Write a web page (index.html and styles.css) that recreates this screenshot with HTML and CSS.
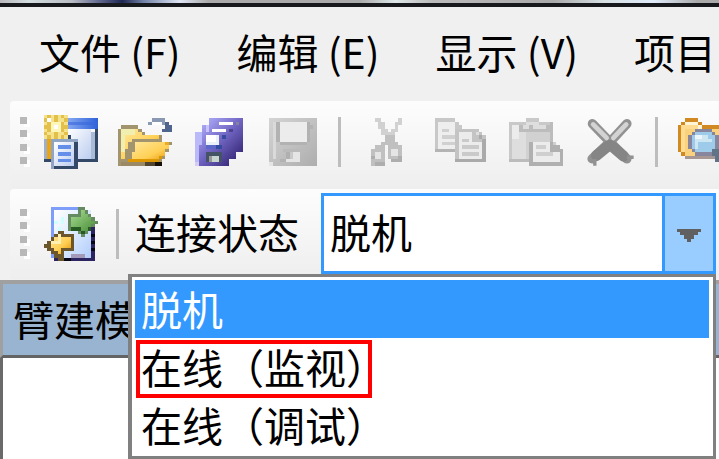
FILE: index.html
```html
<!DOCTYPE html>
<html lang="zh-CN">
<head>
<meta charset="utf-8">
<title>连接状态</title>
<link rel="stylesheet" href="styles.css">
</head>
<body>
<div class="window">
  <div class="title-edge"></div>
  <nav class="menu-bar">
    <button type="button">文件 (F)</button>
    <button type="button">编辑 (E)</button>
    <button type="button">显示 (V)</button>
    <button type="button">项目</button>
  </nav>

  <div class="toolbar toolbar-main" role="toolbar" aria-label="标准">
    <svg class="grip" viewBox="0 0 10 50" aria-hidden="true"><path fill="#fff" d="M4 3h6v7H4zM4 16h6v7H4zM4 30h6v7H4zM4 43h6v7H4z"/><path fill="#b8b8b8" d="M0 0h7v7H0zM0 13h7v7H0zM0 27h7v7H0zM0 40h7v7H0z"/></svg>
    <div class="group">
      <button type="button" aria-label="新建">
        <svg viewBox="0 0 16 16">
          <defs>
            <linearGradient id="pane" x1="0" y1="0" x2="1" y2="1"><stop offset="0" stop-color="#fff"/><stop offset="1" stop-color="#bccdf0"/></linearGradient>
            <linearGradient id="cap" x1="0" y1="0" x2="1" y2="0"><stop offset="0" stop-color="#8fb0f5"/><stop offset="1" stop-color="#2f62d8"/></linearGradient>
            <linearGradient id="gold" x1="0" y1="0" x2="1" y2="1"><stop offset="0" stop-color="#ffe9a0"/><stop offset=".6" stop-color="#ffd055"/><stop offset="1" stop-color="#e09000"/></linearGradient>
          </defs>
          <path fill="#9cb0cc" d="M0 7h1v7H0zM14 5h1v8h-1z"/><path fill="#344868" d="M0 13h16v1H0zM15 4h1v10h-1z"/>
          <path fill="url(#pane)" d="M7 4h7v9H7z"/><path fill="#aabbd6" d="M14 5h1v8h-1z"/>
          <path fill="url(#cap)" d="M6 1h10v3H6z"/><path fill="#3868dc" d="M7 2h9v1H7z" opacity=".6"/>
          <path fill="#eba510" d="M1 7h1v6H1z"/>
          <path fill="#f4e28c" d="M0 0h7v7H0z"/><path fill="#e3c04a" d="M1 0h1v1H1zM3 0h1v2H3zM5 0h1v1H5zM0 1h1v1H0zM6 1h1v1H6zM1 2h1v1H1zM5 2h1v1H5zM0 3h2v1H0zM5 3h2v1H5zM1 4h1v1H1zM5 4h1v1H5zM0 5h1v1H0zM3 5h1v2H3zM6 5h1v1H6zM1 6h1v1H1zM5 6h1v1H5z"/>
          <path fill="#fff7ba" d="M2 2h3v3H2z"/><path fill="#fff" d="M3 3h1v1H3zM1 1h1v1H1z"/>
          <path fill="#344868" d="M7 6h1v1H7zM9 8h1v8H9zM3 15h7v1H3z"/><path fill="#8fa5c3" d="M2 7h8v1H2zM2 7h1v9H2z"/>
          <path fill="url(#pane)" d="M3 8h6v7H3z"/><path fill="#648ee8" d="M4 9h4v1H4zM4 11h4v1H4zM4 13h4v1H4z"/>
        </svg>
      </button>
      <button type="button" aria-label="打开">
        <svg viewBox="0 0 16 16">
          <path fill="#a39470" d="M1 3h5v1h1v1h1v1h5v2h3v1h-1v2h-1v2h-1v2H0V4h1z"/>
          <path fill="url(#gold)" d="M1 4h5v1h1v1h5v1H4v1H3v2H2v3H1z"/><path fill="#f0efaf" d="M1 4h4v2H2v5H1z"/>
          <path fill="url(#gold)" d="M5 8h9v1h1v1h-1v2h-1v1h-1v1H3v-1h1v-2h1z"/>
          <path fill="#df9700" d="M3 13h9v1H3zM12 12h1v1h-1z"/><path fill="#e8ab26" d="M14 8h1v1h-1z"/>
          <path fill="#9b8865" d="M1 14h7v1H1z"/><path fill="#51452f" d="M8 14h3v1H8z"/><path fill="#151008" d="M11 14h2v1h-2z"/>
          <path fill="#8999b4" d="M9 2h1v1H9zM10 1h4v1h-4zM13 2h1v1h-1z"/><path fill="#50658d" d="M14 2h1v2h-1zM13 4h3v1h-3zM15 3h1v1h-1z"/><path fill="#fff" d="M10 2h3v1h-3z"/>
        </svg>
      </button>
      <button type="button" aria-label="全部保存">
        <svg viewBox="0 0 16 16">
          <defs><linearGradient id="disk" x1="0" y1="0" x2="1" y2="1"><stop offset="0" stop-color="#a9a6f5"/><stop offset=".5" stop-color="#7065c2"/><stop offset="1" stop-color="#3b2e7e"/></linearGradient></defs>
          <path fill="url(#disk)" d="M5 1h10v10H5z"/><path fill="#fff" d="M8 2h4v1H8z"/><path fill="#85829f" d="M13 2h1v1h-1z"/>
          <path fill="url(#disk)" d="M3 3h10v10H3z"/><path fill="#c9c4ff" d="M4 3h1v2H4z"/><path fill="#fff" d="M6 4h4v1H6z"/><path fill="#4e428f" d="M11 4h1v1h-1z"/>
          <path fill="url(#disk)" d="M1 5h10v10H1z"/><path fill="#bab9fa" d="M1 5h1v10H1zM2 5h1v4H2z"/>
          <path fill="#e9f2fb" d="M4 6h4v3H4z"/><path fill="#fff" d="M4 6h3v2H4z"/><path fill="#354b9f" d="M7 9h2v1H7zM9 6h1v1H9z"/><path fill="#5b68c8" d="M4 9h3v1H4z"/>
          <path fill="#455366" d="M4 11h5v3H4z"/><path fill="#999" d="M5 12h1v2H5z"/><path fill="#c7d4cf" d="M6 12h2v2H6z"/><path fill="#d5cdf1" d="M1 14h1v1H1z"/>
        </svg>
      </button>
      <button type="button" aria-label="保存" disabled>
        <svg viewBox="0 0 16 16">
          <defs><linearGradient id="grey" x1="0" y1="0" x2="1" y2="1"><stop offset="0" stop-color="#d4d4d4"/><stop offset="1" stop-color="#aeaeae"/></linearGradient></defs>
          <path fill="url(#grey)" d="M1 1h14v14H1z"/><path fill="#dadada" d="M2 2h1v11H2z"/>
          <path fill="#b2b2b2" d="M3 2h1v6H3zM12 2h1v6h-1zM4 8h8v1H4zM13 3h1v1h-1zM4 13h2v1H4z"/><path fill="#ececec" d="M4 2h8v6H4z"/>
          <path fill="#bababa" d="M5 10h6v1H5z"/><path fill="#b0b0b0" d="M6 11h2v2H6z"/><path fill="#e5e5e5" d="M8 11h2v2H8zM6 13h4v1H6zM1 14h1v1H1z"/><path fill="#c9c9c9" d="M7 11h1v2H7z"/>
        </svg>
      </button>
    </div>
    <span class="separator"></span>
    <div class="group">
      <button type="button" aria-label="剪切" disabled>
        <svg viewBox="0 0 16 16">
          <path fill="#d1d1d1" d="M4 1h2v1h1v2h1v1h1V4h1V2h1V1h1v2h-1v2h-1v2H9v1H7V6H6V4H5V2H4z"/>
          <path fill="#c0c0c0" d="M7 6h3v2h1v1h1v5H9v-1H8V9H7v5H6v1H3V10h1V9h2V8h1z"/>
          <path fill="#e5e5e5" d="M4 11h2v2H4zM9 10h2v2H9z"/><path fill="#aeaeae" d="M3 12h1v1H3zM4 14h3v1H4zM11 12h1v1h-1zM9 13h3v1H9z"/>
        </svg>
      </button>
      <button type="button" aria-label="复制" disabled>
        <svg viewBox="0 0 16 16">
          <path fill="#c8c8c8" d="M0 1h6v1h1v1h1v1h1v6H7v1H0z"/><path fill="#eee" d="M1 2h5v8H1z"/><path fill="#d0d0d0" d="M2 4h2v1H2zM2 6h4v1H2zM2 8h4v1H2z"/><path fill="#b4b4b4" d="M0 10h6v1H0z"/>
          <path fill="#c4c4c4" d="M6 4h7v1h1v1h1v8H6z"/><path fill="#ececec" d="M7 5h4v3h3v5H7z"/><path fill="#dfdfdf" d="M12 5h1v1h-1z"/><path fill="#aaa" d="M13 6h1v1h-1zM14 7h1v7h-1zM6 13h9v1H6z"/><path fill="#cacaca" d="M8 7h2v1H8zM8 9h5v1H8zM8 11h5v1H8z"/>
        </svg>
      </button>
      <button type="button" aria-label="粘贴" disabled>
        <svg viewBox="0 0 16 16">
          <path fill="#c9c9c9" d="M0 2h5V1h4v1h4v12H0z"/><path fill="#dedede" d="M1 3h11v10H1z"/><path fill="#d1d1d1" d="M5 4h7v9H5z"/><path fill="#ececec" d="M1 3h2v4H1z"/>
          <path fill="#bcbcbc" d="M3 3h1v1h7V3h1v2H3zM6 3h1v1H6zM0 13h7v1H0zM12 2h1v8h-1z"/><path fill="#dedede" d="M5 2h4v1H5zM4 3h2v1H4zM8 3h2v1H8z"/>
          <path fill="#b0b0b0" d="M6 8h7v1h2v1h1v5H6z"/><path fill="#ececec" d="M7 8h5v3h3v3H7z"/><path fill="#cfcfcf" d="M8 9h3v1H8zM8 11h5v1H8zM13 8h1v1h-1z"/>
        </svg>
      </button>
      <button type="button" aria-label="删除">
        <svg class="smooth" viewBox="0 0 16 16" fill="none" stroke-linecap="round">
          <path stroke="#929292" stroke-width="2.8" d="M2.8 2.6 8 8l-5.300 5M13 2.600 8 8l5 5"/>
          <path stroke="#858585" stroke-width="3.200" d="M7.700 9 4 12M8.300 9l3.700 3.200"/>
          <path stroke="#929292" stroke-width="1" stroke-linecap="butt" d="M3.500 13v2M13 12.500h2"/>
          <path stroke="#d3d3d3" stroke-width="1.400" d="M3 2.800 7 6.800M12.800 2.800 9 6.800"/>
        </svg>
      </button>
    </div>
    <span class="separator"></span>
    <div class="group">
      <button type="button" aria-label="查找">
        <svg viewBox="0 0 16 16">
          <path fill="#d18a21" d="M2 1h4v1h1v1h8v9H1v-1H0V3h1V2h1z"/><path fill="#fff3d8" d="M2 2h4v1h1v1H2z"/><path fill="#ffdc91" d="M1 3h5v1H4v3H2v4H1z"/><path fill="#fad27d" d="M2 4h12v8H2z"/>
          <path fill="#a69694" d="M2 12h10v1H2z"/><path fill="#88869c" d="M5 4h5v1h1v1h1v5h-1v1H5v-1H4v-1H3V6h1V5h1z"/>
          <path fill="#9ecbea" d="M5 5h5v1h1v4h-1v1H5v-1H4V6h1z"/><path fill="#cde6f2" d="M5 6h4v1h1v1H6v2H5z"/><path fill="#edf5fc" d="M5 6h2v1H5z"/><path fill="#617386" d="M10 10h2v1h1v1h1v3h-2v-1h-1v-2h-1z"/>
        </svg>
      </button>
    </div>
  </div>

  <div class="toolbar toolbar-link" role="toolbar" aria-label="连接">
    <svg class="grip" viewBox="0 0 10 50" aria-hidden="true"><path fill="#fff" d="M4 3h6v7H4zM4 16h6v7H4zM4 30h6v7H4zM4 43h6v7H4z"/><path fill="#b8b8b8" d="M0 0h7v7H0zM0 13h7v7H0zM0 27h7v7H0zM0 40h7v7H0z"/></svg>
    <div class="group">
      <button type="button" aria-label="切换连接">
        <svg viewBox="0 0 16 16">
          <defs>
            <linearGradient id="leaf" x1="0" y1="0" x2="1" y2="1"><stop offset="0" stop-color="#a7dc90"/><stop offset="1" stop-color="#4c8f3c"/></linearGradient>
            <linearGradient id="sheet" x1="0" y1="0" x2="1" y2="1"><stop offset="0" stop-color="#fff"/><stop offset=".5" stop-color="#dcebff"/><stop offset="1" stop-color="#b2ccfa"/></linearGradient>
          </defs>
          <path fill="#7e9efa" d="M2 0h10v1H2zM2 0h1v15H2z"/><path fill="url(#sheet)" d="M3 1h11v14H3z"/>
          <path fill="#d0ffff" d="M3 4h1v1H3zM5 4h1v1H5zM4 6h1v1H4zM5 3h1v1H5z"/><path fill="#2b2460" d="M14 6h1v10h-1zM3 15h12v1H3z"/><path fill="#070617" d="M14 8h1v1h-1zM14 10h1v1h-1zM14 12h1v1h-1zM5 15h3v1H5z"/>
          <path fill="#a29ab8" d="M8 14h4v1H8z"/>
          <path fill="#668b63" d="M10 0h2v1h1v1h1v1h1v1h1v1h-1v1h-1v1h-1v1h-1v1h-1V8h-1V7H7V2h3z"/><path fill="url(#leaf)" d="M8 3h3V1h1v1h1v1h1v1h1v1h-1v1h-1v1h-2V6H8z"/><path fill="#275b24" d="M8 6h3v1H8zM11 7h1v1h-1zM13 6h1v1h-1z"/>
          <path fill="#6c562c" d="M4 7h2v1h3v5H6v3H4v-1H3v-1H2v-1H1v-1H0v-1h1v-1h1V9h1V8h1z"/><path fill="url(#gold)" d="M4 8h1v1h3v3H5v2H4v-1H3v-1H2v-1H1h1v-1h1V9h1z"/><path fill="#fff0af" d="M4 8h1v3H2v-1h2z"/>
        </svg>
      </button>
    </div>
    <span class="separator"></span>
    <label class="link-label" for="link-state">连接状态</label>
    <div class="combo">
      <select id="link-state">
        <option selected>脱机</option>
        <option>在线（监视）</option>
        <option>在线（调试）</option>
      </select>
      <span class="combo-arrow"><svg viewBox="0 0 24 13" aria-hidden="true"><path d="M0 0h24v3h-3v3h-4v4h-3v3h-4v-3H7V6H3V3H0z"/></svg></span>
      <ul class="options" role="listbox" aria-label="连接状态">
        <li role="option" aria-selected="true">脱机</li>
        <li role="option" class="marked">在线（监视）</li>
        <li role="option">在线（调试）</li>
      </ul>
    </div>
  </div>

  <section class="panel">
    <h2>臂建模</h2>
  </section>
</div>
</body>
</html>
```
FILE: styles.css
```css
*,
*::after {
  box-sizing: border-box;
}

body {
  margin: 0;
  background: #f0f0f0;
  color: #000;
  font: 41px/56px "Noto Sans CJK SC", sans-serif;
  overflow: hidden;
}

button {
  flex: none;
  padding: 0;
  border: 0;
  background: none;
  color: inherit;
  font: inherit;
}

svg {
  display: block;
  shape-rendering: crispEdges;
}

.smooth {
  shape-rendering: auto;
}

.window {
  display: flex;
  flex-direction: column;
  min-height: 100vh;
}

.title-edge {
  height: 7px;
  border-bottom: 4px solid #18191c;
  background: linear-gradient(90deg, #b9b9bc 0, #d4dde0 4%, #b9bcc4 10%, #5d648a 14%, #1e2752 17%, #7383a8 20%, #e0e6f5 25%, #aaa 29%, #aaa 50%, #dfe7e8 55%, #bbb 60%, #aaa 77%, #d7e0e4 84%, #e0ecfa 91%, #aaa 97%);
}

.menu-bar {
  display: flex;
  gap: 56px;
  padding: 16px 0 22px 39px;
  white-space: nowrap;
}

.toolbar {
  display: flex;
  align-items: center;
  margin-left: 10px;
  padding-left: 10px;
  border-radius: 4px 0 0 4px;
  background: linear-gradient(#fdfdfd, #eee);
}

.toolbar-main {
  padding-top: 14px;
  padding-bottom: 20px;
}

.toolbar-link {
  padding-top: 4px;
  padding-right: 3px;
  padding-bottom: 5px;
}

.grip {
  flex: none;
  width: 10px;
  height: 50px;
  margin-right: 14px;
}

.group {
  display: flex;
  flex: none;
  gap: 20px;
}

.group svg {
  width: 54px;
  height: 54px;
}

.separator {
  flex: none;
  width: 3px;
  height: 50px;
  margin: 0 20px 0 18px;
  background: #bdbdbd;
}

.link-label {
  flex: none;
  margin-right: 22px;
  margin-left: -4px;
  padding-bottom: 6px;
}

.combo {
  position: relative;
  display: flex;
  flex: 1;
  height: 81px;
  border: 3px solid #39f;
  background: #fff;
}

.combo select {
  flex: 1;
  min-width: 0;
  padding: 0 0 6px 6px;
  border: 0;
  outline: 0;
  appearance: none;
  background: #fff;
  color: #000;
  font: inherit;
}

.combo-arrow {
  display: grid;
  flex: none;
  place-items: center;
  width: 51px;
  padding-top: 4px;
  border-left: 3px solid #39f;
  background: #9cf;
}

.combo-arrow svg {
  width: 24px;
  height: 13px;
  fill: #606060;
}

.options {
  position: absolute;
  z-index: 1;
  top: 78px;
  right: -3px;
  width: calc(100% + 199px);
  margin: 0;
  padding: 3px 4px 2px 3px;
  border: 3px solid #808080;
  border-left-width: 4px;
  background: #fff;
  list-style: none;
}

.options li {
  position: relative;
  padding: 0 6px 2px;
}

.options [aria-selected="true"] {
  background: #39f;
  color: #fff;
}

.marked::after {
  position: absolute;
  top: 2px;
  left: 1px;
  width: 236px;
  height: 58px;
  border: 4px solid #f00;
  content: "";
}

.panel {
  flex: 1;
  margin-top: 1px;
  border-left: 3px solid #6a6a6a;
  background: #fff;
}

.panel h2 {
  margin: 0 0 0 -3px;
  padding: 6px 10px 9px;
  border-top: 4px solid #a0a0a0;
  border-bottom: 3px solid #646464;
  border-left: 3px solid #a0a0a0;
  background: #99b4d1;
  font: inherit;
}
```
